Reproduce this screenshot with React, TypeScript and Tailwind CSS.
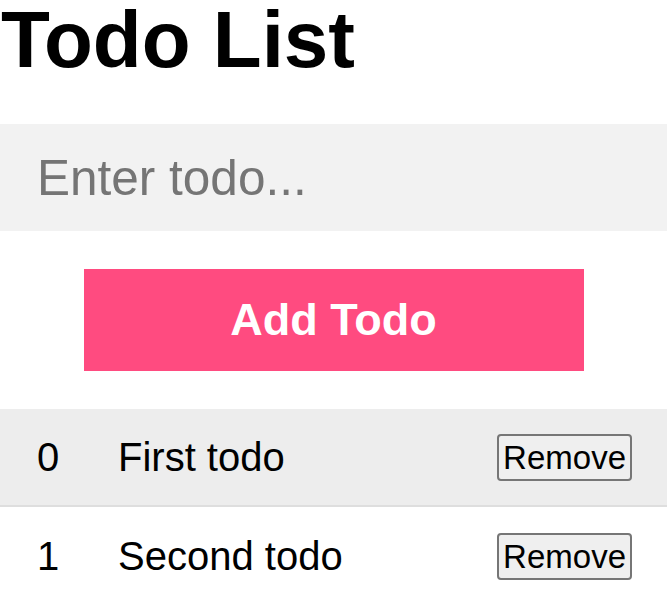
import React, { useState } from 'react';

type Todo = { id: number; text: string };

export default function App() {
    const [text, setText] = useState('');
    const [todos, setTodos] = useState<Todo[]>([
        { id: 0, text: 'First todo' },
        { id: 1, text: 'Second todo' },
    ]);

    const addTodo = () => {
        if (!text.trim()) return;
        setTodos([...todos, { id: todos.length, text }]);
        setText('');
    };

    return (
        <div className="w-full bg-white font-['Liberation_Sans',Arial,sans-serif] text-black">
            <h1 className="m-0 pl-[1px] text-[80px] font-bold leading-none">Todo List</h1>

            {/* Input */}
            <input
                value={text}
                onChange={(e) => setText(e.target.value)}
                placeholder="Enter todo..."
                className="mt-[44px] block h-[107px] w-full bg-[#f2f2f2] pl-[37px] text-[49.5px] outline-none placeholder:text-[#757575]"
            />

            {/* Add button */}
            <div className="flex justify-center py-[38px]">
                <button
                    onClick={addTodo}
                    className="h-[102px] w-[500px] bg-[#ff4b80] text-[45px] font-bold text-white"
                >
                    Add Todo
                </button>
            </div>

            {/* List */}
            <ul>
                {todos.map((todo, i) => (
                    <li
                        key={todo.id}
                        className={`flex h-[98px] items-center pl-[37px] pr-[35px] text-[40px] ${i % 2 === 0 ? 'bg-[#ededed]' : 'bg-white'} ${i === 0 ? 'border-b-2 border-[#dedede]' : ''}`}
                    >
                        <span className="w-[81px]">{todo.id}</span>
                        <span className="flex-1">{todo.text}</span>
                        <button
                            onClick={() => setTodos(todos.filter((t) => t.id !== todo.id))}
                            className="rounded-[4px] border-2 border-[#767676] bg-[#efefef] px-[4px] py-0 text-[33px] leading-[43px]"
                        >
                            Remove
                        </button>
                    </li>
                ))}
            </ul>
        </div>
    );
}
